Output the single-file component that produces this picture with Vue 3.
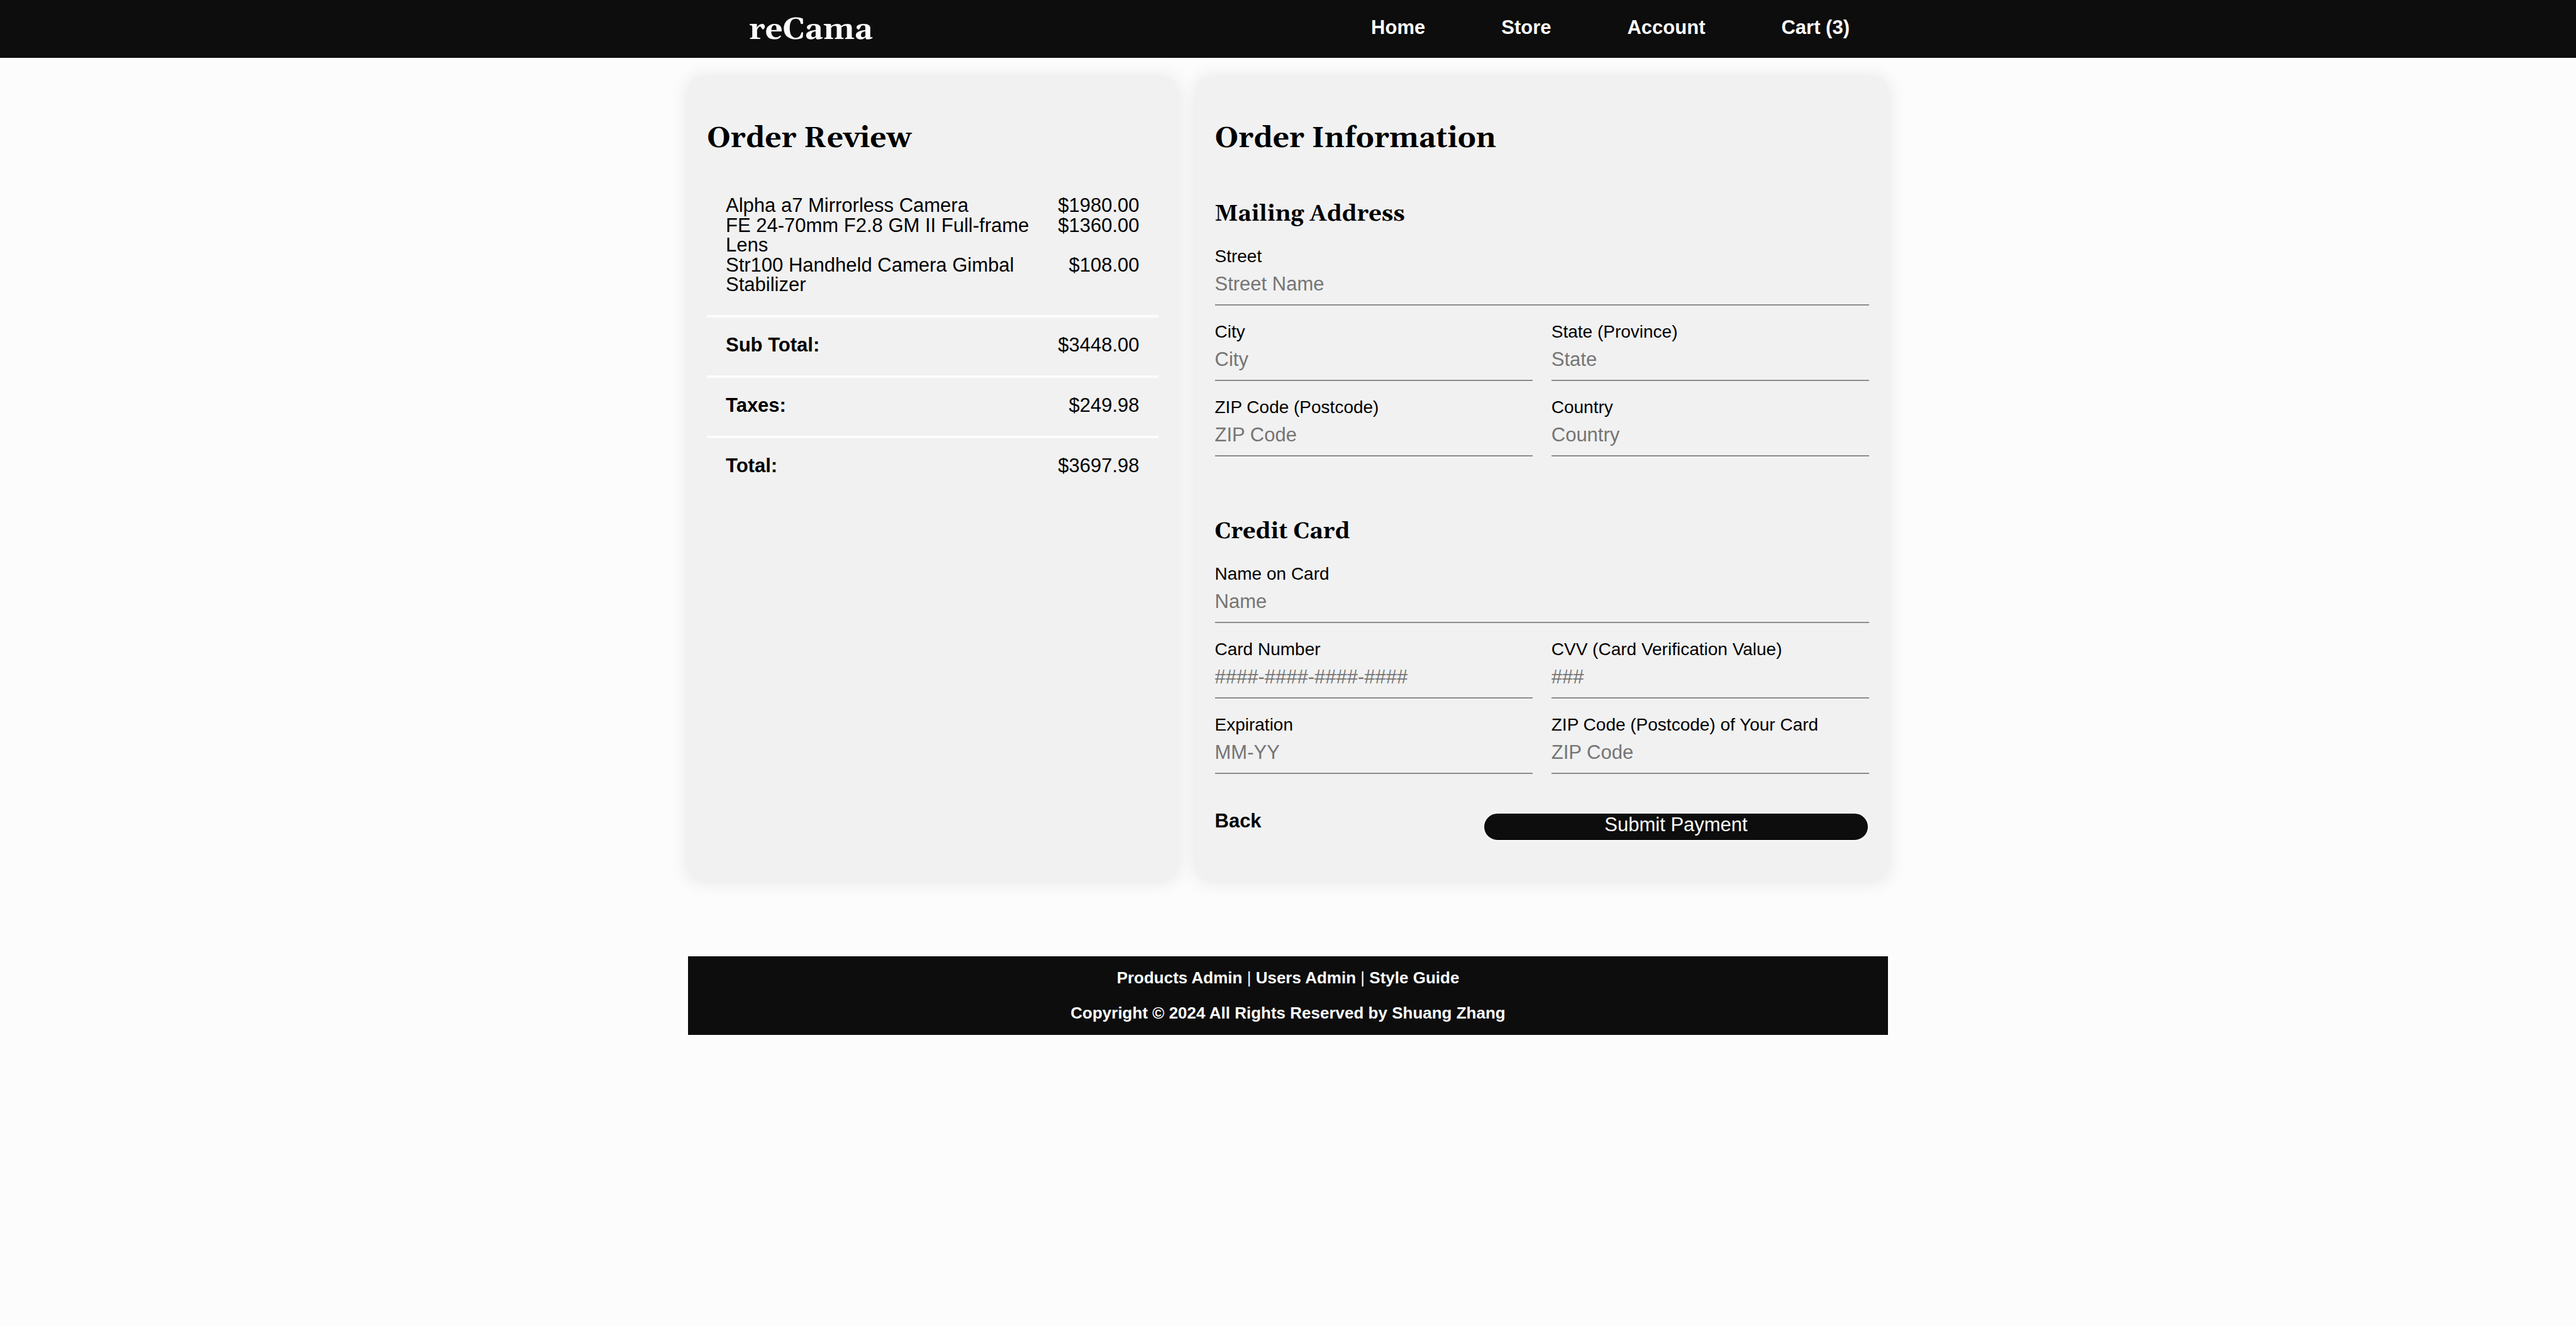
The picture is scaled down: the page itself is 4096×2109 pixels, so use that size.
<script setup>
const nav = ['Home', 'Store', 'Account', 'Cart (3)']
const items = [
  { name: 'Alpha a7 Mirrorless Camera', price: '$1980.00' },
  { name: 'FE 24-70mm F2.8 GM II Full-frame Lens', price: '$1360.00' },
  { name: 'Str100 Handheld Camera Gimbal Stabilizer', price: '$108.00' },
]
const totals = [
  { label: 'Sub Total:', value: '$3448.00' },
  { label: 'Taxes:', value: '$249.98' },
  { label: 'Total:', value: '$3697.98' },
]
const sections = [
  {
    title: 'Mailing Address',
    fields: [
      { id: 'street', label: 'Street', hint: 'Street Name', wide: true },
      { id: 'city', label: 'City', hint: 'City' },
      { id: 'state', label: 'State (Province)', hint: 'State' },
      { id: 'zip', label: 'ZIP Code (Postcode)', hint: 'ZIP Code' },
      { id: 'country', label: 'Country', hint: 'Country' },
    ],
  },
  {
    title: 'Credit Card',
    fields: [
      { id: 'card-name', label: 'Name on Card', hint: 'Name', wide: true },
      { id: 'card-number', label: 'Card Number', hint: '####-####-####-####' },
      { id: 'cvv', label: 'CVV (Card Verification Value)', hint: '###' },
      { id: 'expiration', label: 'Expiration', hint: 'MM-YY' },
      { id: 'card-zip', label: 'ZIP Code (Postcode) of Your Card', hint: 'ZIP Code' },
    ],
  },
]
const adminLinks = ['Products Admin', 'Users Admin', 'Style Guide']
</script>

<template>
  <header class="navbar">
    <div class="container navbar-inner">
      <h1 class="logo">reCama</h1>
      <nav class="menu">
        <a v-for="item in nav" :key="item" href="#">{{ item }}</a>
      </nav>
    </div>
  </header>

  <main class="container columns">
    <section class="card review">
      <h2>Order Review</h2>
      <div class="block items">
        <div v-for="item in items" :key="item.name" class="line">
          <span>{{ item.name }}</span>
          <span class="price">{{ item.price }}</span>
        </div>
      </div>
      <div v-for="row in totals" :key="row.label" class="block line">
        <strong>{{ row.label }}</strong>
        <span class="price">{{ row.value }}</span>
      </div>
    </section>

    <form class="card info" @submit.prevent>
      <h2>Order Information</h2>
      <section v-for="section in sections" :key="section.title" class="group">
        <h3>{{ section.title }}</h3>
        <div class="fields">
          <div v-for="field in section.fields" :key="field.id" class="field" :class="{ wide: field.wide }">
            <label :for="field.id">{{ field.label }}</label>
            <input :id="field.id" type="text" :placeholder="field.hint" />
          </div>
        </div>
      </section>
      <div class="actions">
        <a href="#" class="back">Back</a>
        <button type="submit">Submit Payment</button>
      </div>
    </form>
  </main>

  <footer class="container footer">
    <p>
      <template v-for="(link, i) in adminLinks" :key="link">
        <span v-if="i" class="bar"> | </span><a href="#">{{ link }}</a>
      </template>
    </p>
    <p>Copyright © 2024 All Rights Reserved by Shuang Zhang</p>
  </footer>
</template>

<style>
body {
  margin: 0;
  background: #fcfcfc;
  color: #000;
  font-family: "Liberation Sans", Arial, sans-serif;
  font-size: 31px;
  line-height: 31px;
}
</style>

<style scoped>
* {
  box-sizing: border-box;
}
h1,
h2,
h3,
p {
  margin: 0;
}
h1,
h2,
h3 {
  font-family: Georgia, Gelasio, "Liberation Serif", serif;
  font-weight: 700;
}
a {
  color: inherit;
  text-decoration: none;
  font-weight: 700;
}
.container {
  width: 100%;
  max-width: 1908px;
  margin: 0 auto;
}
.navbar {
  background: #0d0d0d;
  color: #fcfcfc;
}
.navbar-inner {
  display: flex;
  justify-content: space-between;
  height: 92px;
  padding: 0 61px 0 97px;
}
.logo {
  font-size: 49px;
  line-height: 97px;
}
.menu {
  display: flex;
  gap: 121px;
  line-height: 88px;
}
.columns {
  display: grid;
  grid-template-columns: repeat(12, 1fr);
  gap: 30px;
  margin-top: 30px;
}
.card {
  padding: 63px 30px 61px;
  background: #f1f1f1;
  border-radius: 20px;
  box-shadow: 0 2px 30px rgba(0, 0, 0, 0.1);
}
.review {
  grid-column: span 5;
}
.info {
  grid-column: span 7;
}
h2 {
  font-size: 46px;
  line-height: 72px;
}
.review h2 {
  margin-bottom: 26px;
}
.block {
  padding: 28px 30px 33px;
}
.block + .block {
  border-top: 4px solid #fcfcfc;
}
.items {
  display: grid;
  gap: 1px;
}
.line {
  display: flex;
  justify-content: space-between;
  gap: 30px;
}
.price {
  text-align: right;
}
.group {
  padding-top: 59px;
}
.group + .group {
  padding-top: 95px;
}
h3 {
  font-size: 36px;
  line-height: 50px;
}
.fields {
  display: grid;
  grid-template-columns: 1fr 1fr;
  column-gap: 30px;
}
.field {
  display: flex;
  flex-direction: column;
  padding-top: 26px;
}
.wide {
  grid-column: span 2;
}
label {
  font-size: 28px;
  line-height: 32px;
}
input {
  width: 100%;
  height: 62px;
  padding: 0 0 4px;
  border: 0;
  border-bottom: 2px solid #8c8c8c;
  background: none;
  font: inherit;
}
input::placeholder {
  color: #757575;
  opacity: 1;
}
.actions {
  display: flex;
  justify-content: space-between;
  padding-top: 61px;
}
.back {
  line-height: 28px;
}
button {
  width: 614px;
  height: 46px;
  padding: 0 0 8px;
  border: 2px solid #fcfcfc;
  border-radius: 23px;
  background: #0d0d0d;
  color: #fcfcfc;
  font: inherit;
}
.footer {
  margin-top: 122px;
  padding: 19px 0;
  background: #0d0d0d;
  color: #fcfcfc;
  text-align: center;
  font-size: 26px;
  font-weight: 700;
}
.footer p + p {
  margin-top: 25px;
}
.bar {
  font-weight: 400;
}
</style>
